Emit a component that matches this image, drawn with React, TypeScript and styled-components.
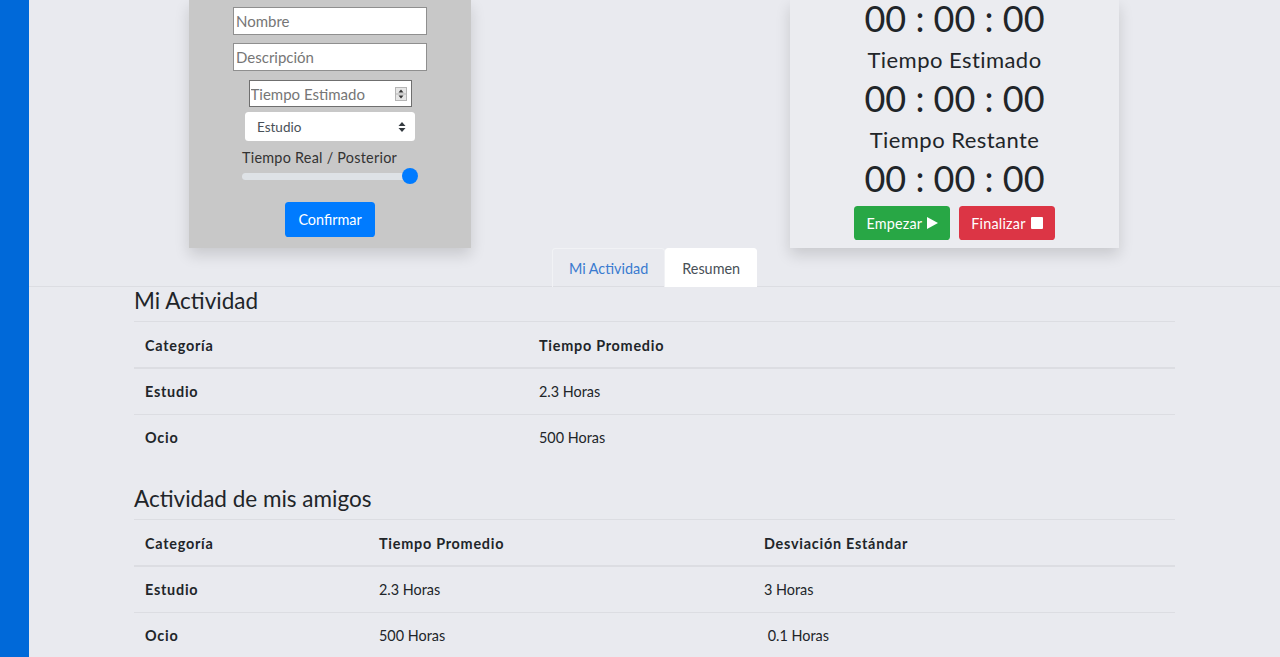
import React from "react";
import styled, { createGlobalStyle } from "styled-components";

const GlobalStyle = createGlobalStyle`
  html, body { margin: 0; padding: 0; }
  body {
    background: #e9eaef;
    font-family: Lato, "Open Sans", sans-serif;
    color: #212529;
    font-size: 14.4px;
    overflow: hidden;
  }
  * { box-sizing: border-box; }
`;

const Shell = styled.div`
  display: flex;
  height: 657px;
  overflow: hidden;
`;

const Sidebar = styled.aside`
  width: 29px;
  flex: none;
  background: #0069d9;
`;

const Main = styled.main`
  flex: 1;
  min-width: 0;
  display: flex;
  flex-direction: column;
`;

const TopRow = styled.div`
  display: flex;
  align-items: flex-start;
  padding-left: 160px;
  gap: 319px;
  position: relative;
  z-index: 1;
`;

const FormCard = styled.section`
  width: 282px;
  height: 248px;
  background: #c8c8c8;
  box-shadow: 0 7px 14px rgba(0, 0, 0, 0.14);
  display: flex;
  flex-direction: column;
  align-items: center;
  padding-top: 7px;
`;

const TextInput = styled.input`
  width: 194px;
  height: 28px;
  border: 1px solid #8f8f8f;
  background: #fff;
  font-family: inherit;
  font-size: 15px;
  padding: 0 2px;
  margin: 0 0 8px;
  color: #333;
  outline: none;
  &::placeholder { color: #767676; }
`;

const NumberBox = styled.div`
  width: 163px;
  height: 27px;
  margin-top: 1px;
  border: 1px solid #6f6f6f;
  background: #fff;
  display: flex;
  align-items: center;
  padding: 0 4px 0 1px;
`;

const BareInput = styled.input`
  flex: 1;
  min-width: 0;
  border: none;
  outline: none;
  background: transparent;
  font-family: inherit;
  font-size: 15px;
  padding: 0;
  color: #333;
  &::placeholder { color: #767676; }
`;

const SelectBox = styled.div`
  width: 170px;
  height: 29px;
  margin-top: 5px;
  background: #fff;
  border-radius: 3.5px;
  display: flex;
  align-items: center;
  justify-content: space-between;
  padding: 0 9px 0 12px;
  font-size: 13.5px;
  color: #495057;
`;

const SliderBlock = styled.div`
  width: 176px;
  margin-top: 6px;
  display: flex;
  flex-direction: column;
`;

const SliderLabel = styled.label`
  font-size: 14.4px;
  line-height: 21px;
  letter-spacing: 0.25px;
  color: #333;
`;

const Range = styled.input`
  -webkit-appearance: none;
  appearance: none;
  width: 176px;
  height: 16px;
  margin: 0;
  background: transparent;
  display: block;
  &::-webkit-slider-runnable-track {
    height: 7px;
    background: #dee2e6;
    border-radius: 4px;
  }
  &::-webkit-slider-thumb {
    -webkit-appearance: none;
    width: 16px;
    height: 16px;
    border-radius: 50%;
    background: #007bff;
    border: none;
    margin-top: -4.5px;
  }
`;

const PrimaryButton = styled.button`
  margin-top: 18px;
  width: 90px;
  height: 35px;
  border: none;
  border-radius: 3.6px;
  background: #007bff;
  color: #fff;
  font-family: inherit;
  font-size: 14.4px;
`;

const TimerCard = styled.section`
  width: 329px;
  height: 248px;
  background: #ebecf0;
  box-shadow: 0 7px 14px rgba(0, 0, 0, 0.14);
  display: flex;
  flex-direction: column;
  align-items: center;
  justify-content: flex-end;
  padding-bottom: 8px;
  overflow: hidden;
`;

const Clock = styled.div`
  font-size: 36px;
  line-height: 36px;
  margin-bottom: 4px;
  color: #212529;
  white-space: nowrap;
  flex: none;
`;

const ClockLabel = styled.div`
  font-size: 22px;
  line-height: 40px;
  letter-spacing: 0.45px;
  color: #212529;
  flex: none;
`;

const ButtonRow = styled.div`
  margin-top: 6px;
  display: flex;
  gap: 9px;
  flex: none;
`;

const ActionButton = styled.button<{ $variant: "success" | "danger" }>`
  height: 34px;
  padding: 0 12px;
  border: none;
  border-radius: 3.6px;
  background: ${(p) => (p.$variant === "success" ? "#28a745" : "#dc3545")};
  color: #fff;
  font-family: inherit;
  font-size: 14.4px;
  letter-spacing: 0.2px;
  display: inline-flex;
  align-items: center;
  gap: 5px;
`;

const TabBar = styled.nav`
  display: flex;
  justify-content: center;
  border-bottom: 1px solid #dcdde2;
`;

const Tab = styled.div<{ $active?: boolean }>`
  height: 39px;
  padding: 0 16px;
  display: flex;
  align-items: center;
  font-size: 14.4px;
  border: 1px solid ${(p) => (p.$active ? "#fff" : "#f1f2f5")};
  border-bottom: none;
  border-radius: 3.6px 3.6px 0 0;
  background: ${(p) => (p.$active ? "#fff" : "transparent")};
  color: ${(p) => (p.$active ? "#495057" : "#3a7bd0")};
  margin-bottom: -1px;
`;

const Container = styled.div`
  width: 1041px;
  margin: 0 auto;
  display: flex;
  flex-direction: column;
`;

const SectionTitle = styled.h3<{ $spaced?: boolean }>`
  font-size: 22.5px;
  line-height: 26px;
  font-weight: 400;
  margin: ${(p) => (p.$spaced ? "26px" : "1px")} 0 7px;
  color: #212529;
`;

const Table = styled.table`
  width: 100%;
  border-collapse: collapse;
  font-size: 14.4px;
  color: #212529;
`;

const Th = styled.th<{ $w?: number }>`
  text-align: left;
  font-weight: 700;
  letter-spacing: 0.75px;
  padding: 13px 11px 10px;
  line-height: 22px;
  border-top: 1px solid #dcdde2;
  border-bottom: 2px solid #dcdde2;
  width: ${(p) => (p.$w ? `${p.$w}px` : "auto")};
`;

const Td = styled.td<{ $bold?: boolean }>`
  text-align: left;
  padding: 12px 11px;
  line-height: 21px;
  border-top: 1px solid #dcdde2;
  font-weight: ${(p) => (p.$bold ? 700 : 400)};
  letter-spacing: ${(p) => (p.$bold ? "0.75px" : "0")};
`;

const PlayIcon = () => (
  <svg width="11" height="12" viewBox="0 0 11 12" aria-hidden>
    <path d="M0 0 L11 6 L0 12 Z" fill="#fff" />
  </svg>
);

const StopIcon = () => (
  <svg width="12" height="12" viewBox="0 0 12 12" aria-hidden>
    <rect x="0" y="0" width="12" height="12" rx="1" fill="#fff" />
  </svg>
);

const SpinIcon = () => (
  <svg width="12" height="14" viewBox="0 0 12 14" aria-hidden>
    <rect x="0.5" y="0.5" width="11" height="13" fill="#e6e6e6" stroke="#b5b5b5" />
    <line x1="1" y1="7" x2="11" y2="7" stroke="#b5b5b5" />
    <path d="M3.5 5.5 L6 2.5 L8.5 5.5 Z" fill="#333" />
    <path d="M3.5 8.5 L6 11.5 L8.5 8.5 Z" fill="#333" />
  </svg>
);

const SelectArrows = () => (
  <svg width="8" height="12" viewBox="0 0 8 12" aria-hidden>
    <path d="M0.5 5 L4 1 L7.5 5 Z" fill="#343a40" />
    <path d="M0.5 7 L4 11 L7.5 7 Z" fill="#343a40" />
  </svg>
);

type Row = { cat: string; avg: string; dev?: string };

const mine: Row[] = [
  { cat: "Estudio", avg: "2.3 Horas" },
  { cat: "Ocio", avg: "500 Horas" },
];

const friends: Row[] = [
  { cat: "Estudio", avg: "2.3 Horas", dev: "3 Horas" },
  { cat: "Ocio", avg: "500 Horas", dev: "\u00a00.1 Horas" },
];

export default function App() {
  return (
    <>
      <GlobalStyle />
      <Shell>
        <Sidebar />
        <Main>
          <TopRow>
            <FormCard>
              <TextInput placeholder="Nombre" />
              <TextInput placeholder="Descripción" />
              <NumberBox>
                <BareInput placeholder="Tiempo Estimado" />
                <SpinIcon />
              </NumberBox>
              <SelectBox>
                <span>Estudio</span>
                <SelectArrows />
              </SelectBox>
              <SliderBlock>
                <SliderLabel>Tiempo Real / Posterior</SliderLabel>
                <Range type="range" min={0} max={100} defaultValue={100} />
              </SliderBlock>
              <PrimaryButton>Confirmar</PrimaryButton>
            </FormCard>
            <TimerCard>
              <Clock>00 : 00 : 00</Clock>
              <ClockLabel>Tiempo Estimado</ClockLabel>
              <Clock>00 : 00 : 00</Clock>
              <ClockLabel>Tiempo Restante</ClockLabel>
              <Clock>00 : 00 : 00</Clock>
              <ButtonRow>
                <ActionButton $variant="success">
                  Empezar <PlayIcon />
                </ActionButton>
                <ActionButton $variant="danger">
                  Finalizar <StopIcon />
                </ActionButton>
              </ButtonRow>
            </TimerCard>
          </TopRow>
          <TabBar>
            <Tab>Mi Actividad</Tab>
            <Tab $active>Resumen</Tab>
          </TabBar>
          <Container>
            <SectionTitle>Mi Actividad</SectionTitle>
            <Table>
              <thead>
                <tr>
                  <Th $w={394}>Categoría</Th>
                  <Th>Tiempo Promedio</Th>
                </tr>
              </thead>
              <tbody>
                {mine.map((r) => (
                  <tr key={r.cat}>
                    <Td $bold>{r.cat}</Td>
                    <Td>{r.avg}</Td>
                  </tr>
                ))}
              </tbody>
            </Table>
            <SectionTitle $spaced>Actividad de mis amigos</SectionTitle>
            <Table>
              <thead>
                <tr>
                  <Th $w={234}>Categoría</Th>
                  <Th $w={385}>Tiempo Promedio</Th>
                  <Th>Desviación Estándar</Th>
                </tr>
              </thead>
              <tbody>
                {friends.map((r) => (
                  <tr key={r.cat}>
                    <Td $bold>{r.cat}</Td>
                    <Td>{r.avg}</Td>
                    <Td>{r.dev}</Td>
                  </tr>
                ))}
              </tbody>
            </Table>
          </Container>
        </Main>
      </Shell>
    </>
  );
}
